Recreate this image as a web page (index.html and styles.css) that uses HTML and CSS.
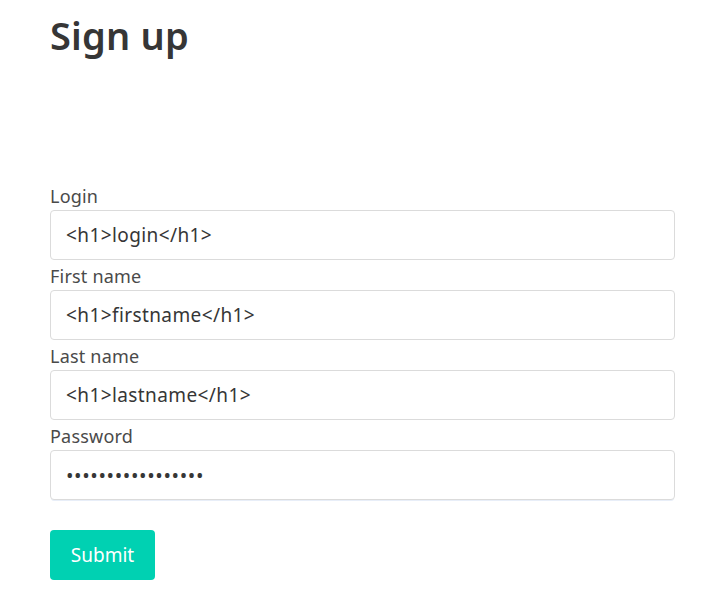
FILE: index.html
```html
<!DOCTYPE html>
<html lang="en">
<head>
<meta charset="utf-8">
<title>Sign up</title>
<link rel="stylesheet" href="styles.css">
</head>
<body>
<main class="page">
  <h1 class="title">Sign up</h1>
  <form class="form">
    <div class="field">
      <label class="label" for="login">Login</label>
      <input class="input" id="login" type="text" value="&lt;h1&gt;login&lt;/h1&gt;">
    </div>
    <div class="field">
      <label class="label" for="first">First name</label>
      <input class="input" id="first" type="text" value="&lt;h1&gt;firstname&lt;/h1&gt;">
    </div>
    <div class="field">
      <label class="label" for="last">Last name</label>
      <input class="input" id="last" type="text" value="&lt;h1&gt;lastname&lt;/h1&gt;">
    </div>
    <div class="field">
      <label class="label" for="pass">Password</label>
      <input class="input input-pass" id="pass" type="password" value="abcdefghijklmnopq">
    </div>
    <button class="button" type="button">Submit</button>
  </form>
</main>
</body>
</html>
```
FILE: styles.css
```css
html, body {
  margin: 0;
  padding: 0;
  background: #fff;
}
body {
  font-family: "Noto Sans", "Open Sans", sans-serif;
  color: #363636;
}
.page {
  padding: 0 43px 0 50px;
}
.title {
  margin: 0;
  padding-top: 11px;
  font-size: 38px;
  line-height: 48px;
  font-weight: 600;
  color: #363636;
  letter-spacing: 0.2px;
}
.form {
  margin-top: 127px;
  display: flex;
  flex-direction: column;
  align-items: flex-start;
}
.field {
  display: flex;
  flex-direction: column;
  width: 625px;
  margin-bottom: 6px;
}
.label {
  font-size: 18px;
  line-height: 20px;
  color: #4a4a4a;
  margin-bottom: 4px;
  letter-spacing: 0.2px;
}
.input {
  box-sizing: border-box;
  height: 50px;
  width: 625px;
  border: 1px solid #dbdbdb;
  border-radius: 4px;
  padding: 0 15px;
  font-family: inherit;
  font-size: 19px;
  color: #363636;
  background: #fff;
  outline: none;
  letter-spacing: 0.4px;
}
.input-pass {
  font-size: 20px;
  letter-spacing: 0.6px;
  box-shadow: 0 2px 0 -1px #e8eef8;
}
.button {
  margin-top: 24px;
  height: 50px;
  width: 105px;
  border: none;
  border-radius: 4px;
  background: #00d1b2;
  color: #fff;
  font-family: inherit;
  font-size: 19px;
  padding: 0;
  cursor: pointer;
}
```
